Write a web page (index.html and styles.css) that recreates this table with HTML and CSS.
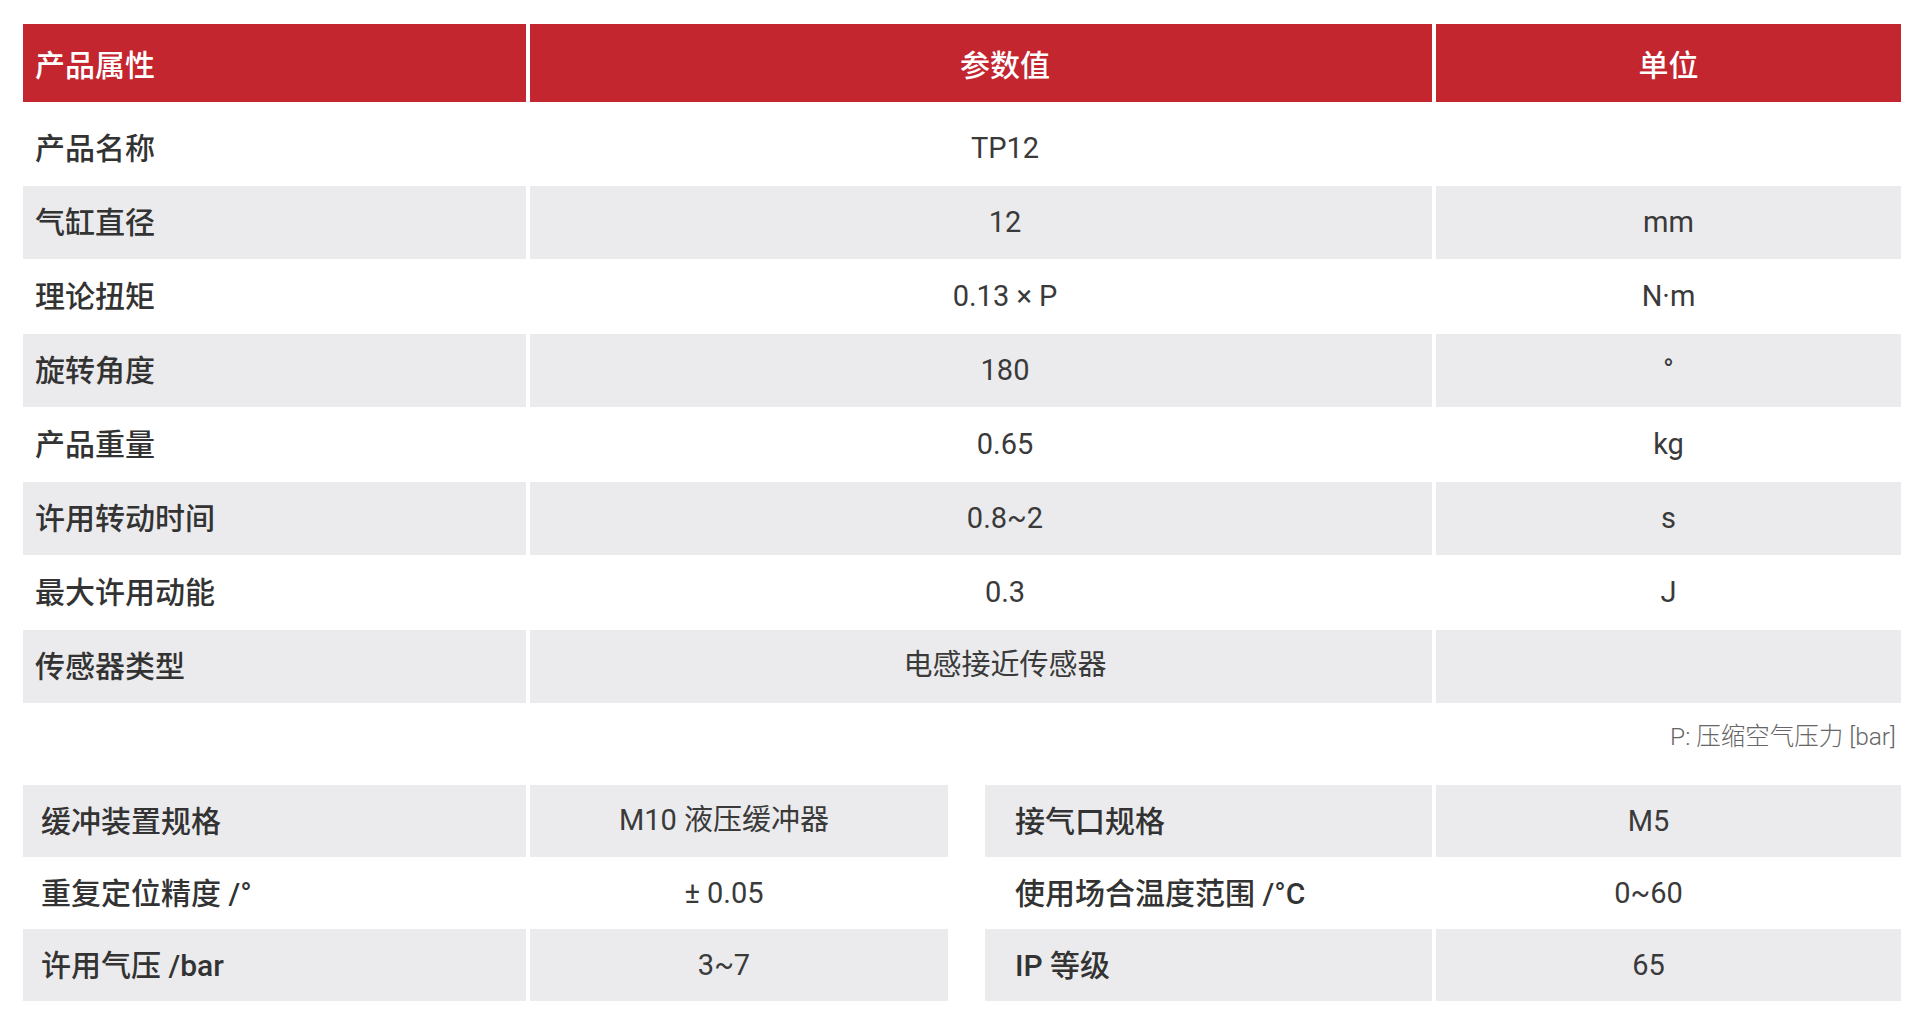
FILE: index.html
```html
<!DOCTYPE html>
<html lang="zh-CN">
<head>
<meta charset="utf-8">
<title>TP12 产品参数</title>
<link rel="stylesheet" href="styles.css">
</head>
<body>
<div class="page">
  <div class="spec">
    <div class="row head">
      <div class="c c1">产品属性</div>
      <div class="c c2">参数值</div>
      <div class="c c3">单位</div>
    </div>
    <div class="row">
      <div class="c c1">产品名称</div>
      <div class="c c2">TP12</div>
      <div class="c c3"></div>
    </div>
    <div class="row alt">
      <div class="c c1">气缸直径</div>
      <div class="c c2">12</div>
      <div class="c c3">mm</div>
    </div>
    <div class="row">
      <div class="c c1">理论扭矩</div>
      <div class="c c2">0.13 × P</div>
      <div class="c c3">N·m</div>
    </div>
    <div class="row alt">
      <div class="c c1">旋转角度</div>
      <div class="c c2">180</div>
      <div class="c c3">°</div>
    </div>
    <div class="row">
      <div class="c c1">产品重量</div>
      <div class="c c2">0.65</div>
      <div class="c c3">kg</div>
    </div>
    <div class="row alt">
      <div class="c c1">许用转动时间</div>
      <div class="c c2">0.8~2</div>
      <div class="c c3">s</div>
    </div>
    <div class="row">
      <div class="c c1">最大许用动能</div>
      <div class="c c2">0.3</div>
      <div class="c c3">J</div>
    </div>
    <div class="row alt">
      <div class="c c1">传感器类型</div>
      <div class="c c2 zh">电感接近传感器</div>
      <div class="c c3"></div>
    </div>
  </div>

  <p class="note">P: 压缩空气压力 [bar]</p>

  <div class="extra">
    <div class="mini left">
      <div class="mrow alt"><div class="m ml">缓冲装置规格</div><div class="m mv zh">M10 液压缓冲器</div></div>
      <div class="mrow"><div class="m ml">重复定位精度 /°</div><div class="m mv">± 0.05</div></div>
      <div class="mrow alt"><div class="m ml">许用气压 /bar</div><div class="m mv">3~7</div></div>
    </div>
    <div class="mini right">
      <div class="mrow alt"><div class="m ml">接气口规格</div><div class="m mv">M5</div></div>
      <div class="mrow"><div class="m ml">使用场合温度范围 /°C</div><div class="m mv">0~60</div></div>
      <div class="mrow alt"><div class="m ml">IP 等级</div><div class="m mv">65</div></div>
    </div>
  </div>
</div>
</body>
</html>
```

FILE: styles.css
```css
html, body {
  margin: 0;
  padding: 0;
  background: #ffffff;
}

body {
  font-family: "Roboto", "Noto Sans CJK SC", "Noto Sans", sans-serif;
  color: #333333;
}

.page {
  padding: 24px 19px 0 23px;
}

/* main spec table */
.spec .row {
  display: grid;
  grid-template-columns: 503px 902px 465px;
  column-gap: 4px;
  height: 73px;
  margin-bottom: 1px;
}

.spec .row.head {
  height: 78px;
  margin-bottom: 10px;
}

.c {
  display: flex;
  align-items: center;
  box-sizing: border-box;
  padding-bottom: 2px;
  font-size: 29px;
  font-weight: 400;
  color: #3a3a3a;
  white-space: nowrap;
}

.c1 {
  padding-left: 12px;
  padding-bottom: 5px;
  font-size: 30px;
  font-weight: 500;
  color: #333333;
}

.c2 {
  justify-content: center;
  padding-left: 48px;
}

.c3 {
  justify-content: center;
}

.row.alt .c {
  background: #ebebed;
}

.row.head .c {
  padding-bottom: 0;
  background: #c3262f;
  color: #ffffff;
  font-size: 30px;
  font-weight: 500;
}

/* footnote */
.note {
  margin: 0;
  height: 81px;
  box-sizing: border-box;
  padding: 20px 5px 0 0;
  line-height: 26px;
  font-size: 24.5px;
  font-weight: 300;
  color: #666666;
  text-align: right;
}

/* bottom tables */
.extra {
  display: flex;
  column-gap: 37px;
}

.mini .mrow {
  display: grid;
  column-gap: 4px;
  height: 72px;
}

.mini.left .mrow {
  grid-template-columns: 503px 418px;
}

.mini.right .mrow {
  grid-template-columns: 447px 465px;
}

.mrow.alt .m {
  background: #ebebed;
}

.m {
  display: flex;
  align-items: center;
  box-sizing: border-box;
  white-space: nowrap;
}

.ml {
  padding-bottom: 4px;
  font-size: 30px;
  font-weight: 500;
  color: #333333;
}

.mv {
  justify-content: center;
  padding-bottom: 1px;
  font-size: 29px;
  font-weight: 400;
  color: #3a3a3a;
}

.c.zh,
.m.zh {
  padding-bottom: 9px;
}

.mini.left .ml {
  padding-left: 18px;
}

.mini.left .mv {
  padding-right: 30px;
}

.mini.right .ml {
  padding-left: 30px;
}

.mini.right .mv {
  padding-right: 40px;
}
```
